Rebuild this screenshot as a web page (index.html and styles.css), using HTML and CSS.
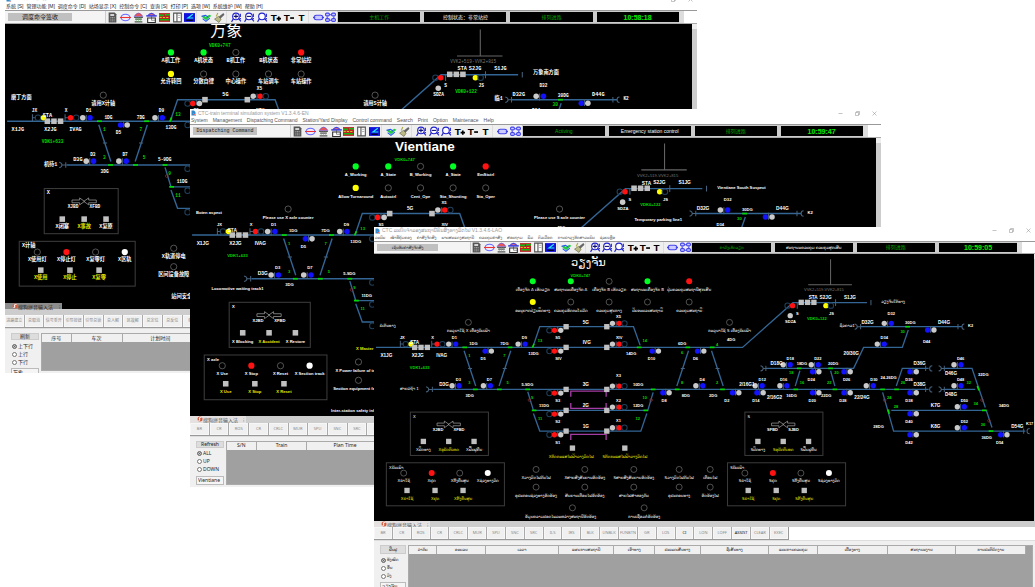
FILE: index.html
```html
<!DOCTYPE html>
<html lang="en">
<head>
<meta charset="utf-8">
<title>CTC-train terminal simulation system</title>
<link rel="stylesheet" href="styles.css">
</head>
<body>
<main class="desktop" id="desktop"></main>
<script src="app.js"></script>
</body>
</html>
```
FILE: styles.css
```css
* { box-sizing: border-box; }
body { margin: 0; background: #fff; overflow: hidden; font-family: "Noto Sans", "DejaVu Sans", "Noto Sans CJK SC", sans-serif; font-size: 4px; color: #333; }
button, select, input { font: inherit; color: inherit; margin: 0; padding: 0; border: 0; border-radius: 0; }
.desktop { position: relative; height: 100vh; overflow: hidden; }

.win { position: absolute; display: flex; flex-direction: column; background: #fff; line-height: 1; }
.win-zh { left: 5px; top: -5px; width: 66.9%; --title: 8px; --menu: 7px; --tool: 14px; font-family: "Liberation Sans", "Noto Sans CJK SC", sans-serif; }
.win-en { left: 190px; top: 109px; width: 66.8%; --title: 8px; --menu: 7px; --tool: 14px; }
.win-lo { left: 374px; top: 227px; width: 63.9%; --title: 7px; --menu: 7px; --tool: 13px; font-family: "Noto Sans", "DejaVu Sans", sans-serif; }

.titlebar { display: flex; align-items: center; gap: 2px; height: var(--title); padding-left: 1px; color: #999; }
.titlebar svg { width: 5px; height: 6px; }
.titlebar h2 { flex: 1; margin: 0; font-size: 4px; font-weight: 400; white-space: nowrap; }
.win-en .titlebar h2, .win-lo .titlebar h2 { font-family: "Liberation Sans", "DejaVu Sans", sans-serif; font-size: 5px; }
.caption { display: flex; gap: 12px; padding-right: 4px; }
.caption button { background: none; width: 5px; height: 6px; }
.caption svg { display: block; width: 5px; height: 5px; }
.menu { display: flex; align-items: center; gap: 5px; height: var(--menu); padding-left: 1px; white-space: nowrap; }
.menu a { color: #555; text-decoration: none; }
.win-zh .menu { font-size: 5px; gap: 3px; }
.win-zh .menu a { color: #222; }
.win-en .menu { font-size: 5px; font-family: "Liberation Sans", sans-serif; }

.toolbar { display: flex; align-items: stretch; height: var(--tool); background: #efefef; border-top: 1px solid #999; border-bottom: 1px solid #aaa; }
.command { width: 14.6%; padding: 2px 0 2px 3px; background: #f4f4f4; border-right: 1px solid #ccc; display: flex; }
.command button { width: 66%; background: #c0c0c0; color: #222; white-space: nowrap; }
.win-en .command button { font: 5px "Liberation Mono", monospace; }
.win-zh .command button { font-size: 6px; }
.icons { display: flex; width: 33.4%; }
.icons button { flex: 13; background: none; display: flex; align-items: center; justify-content: center; min-width: 0; }
.icons svg { width: 11px; height: 11px; }
.icons span { flex: 3; border-left: 1px solid #ddd; }
.states { flex: 1; display: grid; grid-template-columns: repeat(4, 1fr); gap: 4px; border-right: 5px solid #ddd; background: #ccc; padding-left: 1px; font-size: 5px; font-family: "Liberation Sans", "DejaVu Sans", "Noto Sans CJK SC", sans-serif; }
.states output { display: flex; align-items: center; justify-content: center; background: #000; margin: 1px 0; color: #00a800; white-space: nowrap; min-width: 0; }
.states output:nth-child(2) { color: #fff; }
.states output:nth-child(4) { color: #00f000; font: bold 7px "Liberation Sans", sans-serif; }
.win-lo .states output:nth-child(-n+2) { font-size: 4px; }
.states + i { width: 2%; background: #fff; }

.view { display: flex; background: #000; }
.view svg { display: block; flex: 1; min-width: 0; }
.vbar { width: 5px; background: #cdcdcd; border-top: 5px solid #eee; }
.win-lo .vbar { width: 1px; }
.hbar { display: flex; height: 7px; background: #f2f2f2; }
.win-lo .hbar, .win-zh .hbar { height: 6px; }
.hbar i { width: 94%; background: #cdcdcd; margin-right: auto; }
.ime { width: 57px; background: #e6e1e1; color: #555; display: flex; align-items: center; justify-content: space-between; padding: 0 2px 0 7px; white-space: nowrap; font-size: 5px; font-family: "Noto Sans CJK SC", sans-serif; }
.ime b { font-weight: 400; margin-right: auto; }
.ime svg { width: 6px; height: 6px; }
.win-zh .ime { position: absolute; left: 0; bottom: 64px; height: 6px; background: #8c8c8c; color: #222; }
.actions { display: flex; height: 13px; background: #fff; }
.actions div { width: 62.7%; display: grid; grid-template-columns: repeat(22, 1fr); background: #aaa; gap: 1px; border-right: 1px solid #999; border-bottom: 1px solid #999; }
.actions button { background: #f0f0f0; color: #888; overflow: hidden; white-space: nowrap; border: 1px solid #f7f7f7; }
.actions button.on { color: #111; }

.dock { display: flex; gap: 2px; padding: 4px 2px 2px 6px; height: 53px; background: #f0f0f0; border-top: 1px solid #ddd; overflow: hidden; }
.win-zh .dock { height: 45px; }
.win-en .dock { height: 51px; }
.side { width: 28px; display: flex; flex-direction: column; }
.win-lo .side { width: 26px; }
.side > button { height: 9px; background: #ddd; border: 1px solid #ccc; margin-bottom: 3px; font-size: 5px; color: #222; }
.side fieldset { border: 0; margin: 0; padding: 0 0 0 1px; display: grid; gap: 2px; }
.side label { display: flex; align-items: center; gap: 1px; height: 6px; font-size: 5px; color: #222; }
.win-lo .side > button, .win-lo .side label { font-size: 4px; }
.side input { appearance: none; width: 5px; height: 5px; border: 1px solid #777; border-radius: 50%; background: #fff; flex: none; }
.side input:checked { background: #444; box-shadow: inset 0 0 0 1px #ccc; }
.side select { appearance: none; height: 9px; margin-top: 3px; border: 1px solid #bbb; background: #f5f5f5; padding-left: 1px; color: #222; flex: none; font-size: 5px; }
.grid { flex: 1; background: #a0a0a0; border: 1px solid #aaa; min-width: 0; }
.grid table { width: 99%; table-layout: fixed; border-collapse: collapse; }
.grid th { height: 8px; padding: 0; background: #f0f0f0; border-right: 1px solid #aaa; font-weight: 400; font-size: 5px; color: #222; white-space: nowrap; overflow: hidden; }
.win-lo .grid th { font-size: 4px; }

svg text { text-anchor: middle; dominant-baseline: central; fill: #fff; font-weight: 700; font-size: 12px; font-family: "Liberation Sans", "DejaVu Sans", sans-serif; }
svg .track { fill: none; stroke: #336595; stroke-width: 4px; }
svg .thin { fill: none; stroke: #47627c; stroke-width: 3px; }
svg .point { stroke: #00d800; stroke-width: 5px; fill: none; }
svg .platform { fill: none; stroke: #a43ca4; stroke-width: 4px; }
svg .wire { stroke: #666; stroke-width: 3px; fill: none; }
svg .frame { fill: none; stroke: #3c3c3c; stroke-width: 3px; }
svg .arrow { fill: #000; stroke: #aaa; stroke-width: 2px; }
svg .sq { fill: #c0c0c0; }
svg .cross { fill: none; stroke: #8b3030; stroke-width: 2px; }
svg .lamp { fill: none; stroke: #777; stroke-width: 2px; }
svg .a { fill: #cacaca; } svg .b { fill: #1212ff; } svg .r { fill: #ff1212; } svg .y { fill: #ff0; } svg .w { fill: #fff; } svg .n { fill: #0f2; }
svg .h { fill: none; stroke: #20405c; stroke-width: 3px; }
svg text.big { font-size: 14px; }
svg text.green { fill: #00d800; }
svg text.gold { fill: #eaea00; }
svg text.dim { fill: #777; font-weight: 400; }
svg text.start { text-anchor: start; }
svg text.name { font-size: 39px; text-anchor: start; }
.win-zh .view text { font-size: 13px; font-family: "Liberation Mono", "Noto Sans CJK SC", monospace; }
.win-zh .view text.big, .win-zh .view text.local { font-size: 15px; }
.win-zh .view text.name { font-size: 46px; font-weight: 400; }
.win-lo .view text.local { font-family: "DejaVu Sans", sans-serif; font-weight: 400; font-size: 12px; }
.win-lo .view text.name { font-family: "DejaVu Sans", sans-serif; font-size: 34px; font-weight: 400; }
.icons svg text { font: bold 18px "Liberation Sans", sans-serif; fill: #000; dominant-baseline: auto; }
```
FILE: app.js
```js
const times = (list, fn) => list.map(fn).join('');
const label = (t, x, y, cls = '') => t ? `<text x="${x}" y="${y}" class="${cls}">${t}</text>` : '';
const dot = (x, y, c, r = 8) => `<circle cx="${x}" cy="${y}" r="${r}" class="${c}"/>`;
const lamp = (x, y, c = 'lamp') => dot(x, y, c, 9);
const square = (x, y) => `<rect x="${x - 8}" y="${y - 8}" width="16" height="16" class="sq"/>`;
const path = (d, c = 'track') => `<path d="${d}" class="${c}"/>`;

/* "text x y" entries separated by commas */
const labels = (src, cls) => times(src.split(','), s => {
  const [t, x, y] = s.trim().split(' ');
  return label(t, x, y, cls);
});
/* grey-then-blue and blue-then-grey shunting signals */
const greyBlue = pts => times(pts, ([x, y]) => path(`M${x + 10} ${y - 8}v20`, 'thin') + dot(x, y, 'a') + dot(x + 21, y, 'b'));
const blueGrey = pts => times(pts, ([x, y]) => path(`M${x + 9} ${y - 12}v20`, 'thin') + dot(x, y, 'b') + dot(x + 19, y, 'a'));
const points = pts => times(pts, ([x, y]) => path(`M${x - 7} ${y}h14`, 'point'));
const crosses = pts => times(pts, ([x, y]) => `<circle cx="${x}" cy="${y}" r="4" class="cross"/>`);

function westYard() {
  return `<g transform="translate(-12 228)">` +
    path('M18 52H1117L1268 -82H1490') +
    path('M488 52L509 -10H790L810 46') +
    path('M282 62L317 168M422 62L387 168M955 62L920 168M473 185L490 241H833L849 187M490 250L509 303H812L830 250') +
    path('M190 178H1675') +
    path('M168 170q8 2 8 8q0 6 -8 8M176 178h14M187 170v16', 'thin') +
    path('M294 115h12M398 115h12M932 115h12', 'thin') +
    path('M602 200V183H708V200M602 219V235H708V219M602 330V313H708V330', 'platform') +
    points([[284, 52], [420, 52], [807, 52], [953, 52], [1026, 52], [316, 178], [388, 178], [473, 178], [849, 178], [921, 178], [492, 241], [827, 241]]) +
    path('M487 53l5 -12', 'point') + crosses([[478, 210], [843, 210]]) +
    path('M91 32v20M91 42h10M185 32v20M185 42h10', 'thin') +
    dot(107, 42, 'h') + dot(123, 42, 'y') + square(134, 52) + square(153, 52) + square(172, 52) +
    dot(201, 42, 'r') + dot(217, 42, 'h') +
    greyBlue([[236, 42], [444, 42], [246, 167], [340, 167], [977, 167]]) +
    blueGrey([[345, 63], [846, 63], [982, 63], [878, 188]]) +
    times([-10, 52, 178, 241, 303], y => path(`M563 ${y}v16M738 ${y - 18}v16`, 'thin') +
      square(588, y) + square(710, y) + dot(538, y + 11, 'h') + dot(553, y + 11, 'r') + dot(572, y + 11, 'a') +
      dot(727, y - 10, 'a') + dot(747, y - 10, 'r') + dot(763, y - 10, 'h')) +
    labels('JX 97 22,X 188 22,D1 253 22,1DG 310 40,D5 339 85,7DG 403 40,D9 463 22,13DG 490 70,S5 563 22,SIV 565 85,14DG 783 70,XIV 747 22,D10 844 85,6DG 936 40,D6 976 85,3DG 299 196,D3 265 147,D7 358 147,5-9DG 472 163,11DG 522 226,S3 563 210,X3 745 137,10DG 804 163,D8 882 210,8DG 947 196,D4 996 147,S2 563 273,X2 745 210,12DG 804 226,S1 563 336,X1 745 272,X5 745 -41') +
    labels('STA 134 38,5G 647 -24,X1JG 49 77,X2JG 143 77,IVAG 215 77,D3G 222 163,IVG 650 38,3G 647 163,2G 647 226,1G 647 289', 'big') +
    labels('VDK1+633 149 111,1 298 77,3 298 157,7 403 77,5 413 157,13 510 32,14 824 32,6 936 66,8 936 157,9 486 202,11 510 265,10 824 202,12 803 265', 'green') + '</g>';
}

function eastYard() {
  return `<g transform="translate(978 228)">` +
    path('M198 115H460L490 52H606L624 0M480 -10H785') +
    path('M34 62L69 168M299 122L285 168M391 122L404 168M588 168L606 115H685M730 115H815L855 232M730 178H825') +
    path('M573 241H858L875 292M547 187L580 303H975') +
    path('M181 107q8 2 8 8q0 6 -8 8M189 115h12M197 107v16M463 -18q8 2 8 8q0 6 -8 8M471 -10h10M481 -18v16M773 -18v16M792 -18q-7 0 -7 8q0 8 7 8', 'thin') +
    path('M676 107v16M696 107q-8 0 -8 8q0 8 8 8M676 170v16M696 170q-8 0 -8 8q0 8 8 8M715 107q8 2 8 8q0 6 -8 8M715 170q8 2 8 8q0 6 -8 8M723 115h8M723 178h8M732 107v16M732 170v16M970 295v16M988 295q-8 0 -8 8q0 8 8 8M46 115h12', 'thin') +
    points([[67, 178], [287, 178], [404, 178], [547, 178], [589, 178], [297, 115], [391, 115], [852, 241], [872, 303], [622, -10]]) +
    path('M563 238l4 13M831 168l5 13', 'point') + crosses([[553, 210], [845, 210], [866, 272]]) +
    greyBlue([[165, 167], [239, 167], [249, 104], [333, 104], [498, 167], [531, 42], [761, 104], [761, 167], [771, 230], [771, 293], [552, -20]]) +
    blueGrey([[97, 188], [170, 188], [337, 125], [431, 125], [337, 188], [431, 188], [629, 125], [629, 188], [629, 251], [629, 314], [901, 314], [682, 0]]) +
    path('M391 -212V-136M324 -136H455', 'wire') + label('VVK2+519-VVK2+815', 371, -121, 'dim') +
    path('M291 -84v20M406 -92v20M512 -90v16', 'thin') +
    dot(262, -73, 'h') + dot(277, -73, 'r') + dot(270, -43, 'a') + square(303, -83) + square(322, -83) + square(341, -83) +
    dot(377, -73, 'y') + dot(392, -73, 'h') +
    labels('4DG 93 29,D2 80 210,2DG 39 196,D12 186 147,D14 167 210,D16 250 147,16DG 274 196,D18 270 85,18DG 305 101,D22 353 85,20DG 399 101,D24 333 149,D26 439 149,D20 336 211,22DG 378 196,D28 428 211,D30 521 147,24-26DG 565 143,D34 552 22,D36 626 149,D38 626 211,D40 626 273,D42 626 336,D46 781 85,D48 781 148,D50 792 211,D52 792 273,32DG 849 133,34DG 911 227,36DG 859 321,28DG 535 289,D54 898 336,K17 988 280,D44 679 34,D32 573 -50,30DG 630 -23,K2 811 -14,SDZA 271 -25,S 291 -50,JS 394 -50') +
    labels('D18G 229 101,2/16G1 140 163,2/16G2 223 202,22/24G 485 202,20/30G 453 70,D36G 658 101,D38G 658 164,K7G 706 226,K8G 706 289,D46G 752 130,D48G 752 193,D54G 951 289,D32G 502 -24,D44G 731 -24,STA 339 -97,S2JG 376 -99,S1JG 449 -99', 'big') +
    labels('4 51 42,2 51 157,16 305 157,18 273 128,20 409 128,22 387 157,26 608 157,24 567 202,28 587 230,30 607 5,32 805 157,34 826 220,36 848 283,VDK0+122 350 -35', 'green') + '</g>';
}

function blockPanel(x, side, w) {
  const mid = x + 115, step = w.blockStep, names = w.block.map(n => side + n);
  return `<rect x="${x}" y="474" width="${w.blockWidth}" height="130" class="frame"/>` +
    label(side, x + 12, 487, 'local') +
    path(`M${mid - 35} 507h22v-6l14 10l-14 10v-6h-22zM${mid + 35} 507h-22v-6l-14 10l14 10v-6h22z`, 'arrow') +
    label(side === 'X' ? 'XJBD' : 'SFBD', mid - 32, 527) + label(side === 'X' ? 'XFBD' : 'SJBD', mid + 31, 527) +
    times(names, (n, i) => square(mid + (i - 1) * step, 562) + label(n, mid + (i - 1) * step, 586, 'local' + (i === 1 ? ' gold' : '')));
}

function axlePanel(x, side, w) {
  return `<rect x="${x}" y="626" width="${w.axleWidth}" height="129" class="frame"/>` +
    label(side + w.axleTitle, x + 8, 639, 'local start') +
    times(w.axleLamps, (n, i) => lamp(x + 52 + i * 84, 657, ['lamp', 'r', 'lamp', 'w'][i]) + label(side + n, x + 52 + i * 84, 680, 'local')) +
    times(w.axleKeys, (n, i) => square(x + 62 + i * 84, 709) + label(side + n, x + 62 + i * 84, 732, 'local gold'));
}

function schematic(w) {
  const colors = ['n', 'n', 'lamp', 'n', 'r', 'y', 'lamp', 'lamp', 'lamp', 'lamp'];
  const faults = [486, 632, 779, 915, 1008];
  return `<svg viewBox="0 0 1980 ${w.height}" role="img" aria-label="${w.name}">` +
    label(w.name, 591, 24, 'name') + label('VDK0+747', 619, 63, 'green') +
    times(w.lights, (n, i) => {
      const x = w.lightX[i % 5], y = i < 5 ? 82 : 144;
      return lamp(x, y, colors[i]) + label(n, x, y + 24, 'local');
    }) +
    label(w.north, 17, 214, 'local start') + lamp(283, 205) + label(w.counterX, 283, 230, 'local') +
    label(w.south, 1521, 142, 'local start') + lamp(1066, 205) + label(w.counterS, 1066, 229, 'local') +
    label(w.park[0], w.park[1], w.park[2], 'local start') + label(w.wait[0], w.wait[1], w.wait[2], 'local start') +
    westYard() + eastYard() +
    blockPanel(w.panelX, 'X', w) + blockPanel(1112, 'S', w) +
    axlePanel(w.panelX - 72, 'X', w) + axlePanel(1060, 'S', w) +
    square(595, 582) + square(752, 582) +
    label(w.master[0], w.masterX, 607, 'local gold start') + label(w.master[1], 752, 607, 'local gold') +
    times(faults, (x, i) => lamp(x, 646) + label(w.faults[i], x, 671, 'local') + lamp(x, 699) + label(w.faults[i + 5], x, 723, 'local')) +
    lamp(595, 761) + lamp(810, 761) + label(w.safety[0], w.safetyX, 786, 'local start') + label(w.safety[1], 810, 786, 'local') + '</svg>';
}

const icon = body => `<svg viewBox="0 0 20 20">${body}</svg>`;
const glass = mark => icon(`<circle cx="9" cy="8" r="6" fill="#fff" stroke="#22c" stroke-width="2"/><path d="M4 13L1 18M14 12l4 5M17 3v6M17 11v2" stroke="#22c" stroke-width="2"/><path d="${mark}" stroke="#117" stroke-width="2"/>`);
const loop = '<ellipse cx="10" cy="10" rx="8" ry="6" fill="#eef" stroke="#66f" stroke-width="2"/>';
const icons = [
  ['Calculator', icon('<path d="M3 1h11l3 3v15H3z" fill="#555"/><path d="M6 4h7v3H6z" fill="#eee"/><path d="M6 10h9M6 13h9M6 16h9" stroke="#ddd" stroke-dasharray="2 1"/>')],
  ['Section', icon(loop + '<path d="M0 10h20" stroke="#e33" stroke-width="2"/>')],
  ['Station', icon('<path d="M2 8q8-12 16 0z" fill="#e55" stroke="#44d"/><path d="M2 10h16M4 13h12M3 18h14" stroke="#555" stroke-width="2"/><path d="M6 10v8M10 10v8M14 10v8" stroke="#6a6"/>')],
  ['Yard', icon('<path d="M3 7q7-9 14 0z" fill="#e66" stroke="#44d" stroke-width="2"/><path d="M0 7h20" stroke="#44d" stroke-width="2"/><path d="M3 11h14v8H3z" fill="#fff" stroke="#333" stroke-width="2"/><path d="M10 8v7h7" stroke="#333" fill="none"/>')],
  ['Map', icon('<path d="M0 2h20v16H0z" fill="#b22"/><path d="M0 6h9M11 5h9M2 14h16" stroke="#1b1" stroke-width="3"/><path d="M1 10h18" stroke="#db2" stroke-width="2" stroke-dasharray="4 2"/>')],
  ['Report', icon('<path d="M3 2h14v16H3zM9 2v16" fill="#fff" stroke="#555" stroke-width="2"/><path d="M11 6h4M11 10h4" stroke="#777"/>')],
  ['Plan', icon('<path d="M0 2h20v16H0z" fill="#11d"/><path d="M16 4L7 11h10" fill="none" stroke="#2ee" stroke-width="2"/><path d="M4 15h12" stroke="#000" stroke-width="2"/>')],
  null,
  ['Accept', icon('<path d="M1 8l8 7 10-8-4-2-6 4-3-2z" fill="#2c4"/><path d="M1 8l7-2 5 3M3 12l6 5 7-6" stroke="#25e" stroke-width="2" fill="none"/>')],
  ['Brush', icon('<path d="M17 2l2 3-7 7-4-3z" fill="#666"/><path d="M8 8l5 5-4 6-8-6z" fill="#bb8" stroke="#553"/><path d="M4 8l3-6" stroke="#aa4" stroke-width="2"/>')],
  null,
  ['Zoom in', glass('M5 8h8M9 4v8')],
  ['Zoom out', glass('M5 8h8')],
  ['Zoom', glass('')],
  ['Larger text', icon('<text x="7" y="17">T</text><path d="M12 12h8M16 8v8" stroke="#000" stroke-width="3"/>')],
  ['Smaller text', icon('<text x="7" y="17">T</text><path d="M13 11h7" stroke="#000" stroke-width="3"/>')],
  ['Text', icon('<text x="10" y="17">T</text>')],
  null,
  ['Link', icon('<rect x="2" y="6" width="16" height="8" rx="4" fill="#ccf" stroke="#44e" stroke-width="2"/><path d="M0 10h4M16 10h4" stroke="#44e" stroke-width="2"/>')],
  ['Link all', icon('<g fill="#ccf" stroke="#44e" stroke-width="2"><rect x="1" y="2" width="7" height="5" rx="2"/><rect x="12" y="2" width="7" height="5" rx="2"/><rect x="1" y="12" width="7" height="5" rx="2"/><rect x="12" y="12" width="7" height="5" rx="2"/></g><path d="M8 5h4M8 15h4M4 8v4M16 8v4" stroke="#44e" stroke-width="2"/>')]
];

const windows = [{
  cls: 'win-zh', lang: 'zh', height: 822, title: 'CTC-车务终端仿真系统 V1.3.4.6',
  menu: ['系统 [S]', '管理功能 [M]', '调度命令 [D]', '站场显示 [X]', '控制命令 [C]', '查询 [S]', '打印 [P]', '选项 [W]', '系统维护 [W]', '帮助 [H]'],
  command: '调度命令签收', states: ['主机工作', '控制状态：非常站控', '排列进路', '10:58:18'],
  name: '万象', lightX: [478, 572, 665, 759, 853],
  lights: ['A机工作', 'A机状态', 'B机工作', 'B机状态', '非常站控', '允许转回', '分散自律', '中心操作', '车站调车', '车站操作'],
  north: '磨丁方面', south: '万象南方面', counterX: '请用X计轴', counterS: '请用S计轴',
  park: ['临1', 1410, 217], wait: ['机待1', 112, 405],
  panelX: 113, blockWidth: 213, blockStep: 63, block: ['闭塞', '事故', '复原'],
  axleWidth: 334, axleTitle: '计轴', axleLamps: ['使用灯', '停止灯', '复零灯', '区轨'], axleKeys: ['使用', '停止', '复零'],
  master: ['', ''], masterX: 595, faults: ['X轨道停电', '', '', '', '', '区间设备故障', '', '', '', ''], safety: ['站间安全信息传输故障', ''], safetyX: 479,
  actions: ['进路建立', '总取消', '信号重开', '引导按钮', '引导总锁', '总人解', '区故解', '总定位', '总反位', '单锁', '单解', '单封', '解封', '功能', '股道', '上电', 'CI', '开灯', '关灯', '辅助', '清除', '执行'],
  refresh: '刷新', radios: ['上下行', '上行', '下行'], station: '万象',
  columns: ['序号', '车次', '计划时间', '接车', '发车', '股道', '状态', '方向', '时间', '备注', '操作']
}, {
  cls: 'win-en', lang: 'en', height: 801, title: 'CTC-train terminal simulation system V1.3.4.6-EN',
  menu: ['System', 'Management', 'Dispatching Command', 'Station/Yard Display', 'Control command', 'Search', 'Print', 'Option', 'Maintenace', 'Help'],
  command: 'Dispatching Command', states: ['Activing', 'Emergency station control', '排列进路', '10:59:47'],
  name: 'Vientiane', lightX: [478, 572, 665, 759, 853],
  lights: ['A_Working', 'A_State', 'B_Working', 'A_State', 'EmStctrl', 'Allow Turnaround', 'Autoctrl', 'Cent_Ope', 'Sta_Shunting', 'Sta_Oper'],
  north: 'Boten aspect', south: 'Vientiane South Suspect', counterX: 'Please use X axle counter', counterS: 'Please use S axle counter',
  park: ['Temporary parking line1', 1282, 235], wait: ['Locomotive waiting track1', 62, 434],
  panelX: 113, blockWidth: 234, blockStep: 76, block: [' Blocking', ' Accident', ' Restore'],
  axleWidth: 354, axleTitle: ' axle', axleLamps: [' Use', ' Stop', ' Reset', ' Section track'], axleKeys: [' Use', ' Stop', ' Reset'],
  master: ['X Master track circuit', ''], masterX: 479, faults: ['X Power failure of track', '', '', '', '', 'Section equipment failure', '', '', '', ''], safety: ['Inter-station safety information', ''], safetyX: 407,
  actions: ['BR', 'CR', 'ROS', 'CR', 'CRLC', 'MUR', 'SPU', 'SNC', 'SRC', 'ILS', 'IRS', 'BLK', 'UNBLK', 'FUNBTN', 'GR', 'LOS', 'CI', 'LON', 'LOFF', 'ASSIST', 'CLEAR', 'EXEC'],
  refresh: 'Refresh', radios: ['ALL', 'UP', 'DOWN'], station: 'Vientiane',
  columns: ['S/N', 'Train', 'Plan Time', 'Receive', 'Depart', 'Track', 'State', 'Direction', 'Time', 'Remark', 'Action']
}, {
  cls: 'win-lo', lang: 'lo', height: 801, title: 'CTC ລະບົບຈຳລອງສະຖານີຂົນສົ່ງທາງລົດໄຟ V1.3.4.6-LAO',
  menu: ['ລະບົບ', 'ໜ້າທີ່ຄຸ້ມຄອງ', 'ຄຳສັ່ງຈັດສົ່ງ', 'ພາບສະແດງສະຖານີ', 'ຄວບຄຸມຄຳສັ່ງ', 'ສອບຖາມ', 'ພິມ', 'ຕົວເລືອກ', 'ການບຳລຸງຮັກສາລະບົບ', 'ຊ່ວຍເຫຼືອ'],
  command: 'ເຊັນຮັບຄຳສັ່ງຈັດສົ່ງ', states: ['ກຳລັງເຮັດວຽກ', 'ສະຖານະຄວບຄຸມ ຄວບຄຸມສຸກເສີນ', '排列进路', '10:59:05'],
  name: 'ວຽງຈັນ', lightX: [476, 590, 705, 820, 945],
  lights: ['ເຄື່ອງຈັກ A ເຮັດວຽກ', 'ສະຖານະເຄື່ອງຈັກ A', 'ເຄື່ອງຈັກ B ເຮັດວຽກ', 'ສະຖານະເຄື່ອງຈັກ B', 'ປຸ່ມຄວບຄຸມສະຖານີສຸກເສີນ', 'ອະນຸຍາດປ່ຽນທິດທາງ', 'ຄວບຄຸມອັດຕະໂນມັດ', 'ຄວບຄຸມສູນກາງ', 'ປັບຂະບວນສະຖານີ', 'ຄວບຄຸມສະຖານີ'],
  north: 'ບໍ່ເຕັນທາງ', south: 'ວຽງຈັນໃຕ້ທາງ', counterX: 'ກະລຸນາໃຊ້ X ເຄື່ອງນັບເພົາ', counterS: 'ກະລຸນາໃຊ້ S ເຄື່ອງນັບເພົາ',
  park: ['ຊົ່ວຄາວ1', 1396, 215], wait: ['ສາຍລໍຖ້າ 1', 78, 403],
  panelX: 109, blockWidth: 234, blockStep: 76, block: ['ປິດທາງ', 'ອຸບັດຕິເຫດ', 'ຟື້ນຟູຄືນ'],
  axleWidth: 354, axleTitle: 'ນັບເພົາ', axleLamps: ['ນຳໃຊ້', 'ຢຸດ', 'ຕັ້ງຄືນສູນ', 'ຊ່ວງທາງລົດ'], axleKeys: ['ນຳໃຊ້', 'ຢຸດ', 'ຕັ້ງຄືນສູນ'],
  master: ['Xຕັດກະແສໄຟຟ້າລາງລົດໄຟ', 'Sຕັດກະແສໄຟຟ້າລາງລົດໄຟ'], masterX: 524,
  faults: ['Xລາງລົດໄຟດັບໄຟ', 'Xສາຍສົ່ງສັນຍານຂັດຂ້ອງ', 'Sສາຍສົ່ງສັນຍານຂັດຂ້ອງ', 'Sລາງລົດໄຟດັບໄຟ', 'ເຕືອນໄຟ', 'ອຸປະກອນຊ່ວງທາງຂັດຂ້ອງ', 'ສັນຍານເຕືອນໄຟຂັດຂ້ອງ', 'ສາຍໄຟສຳຮອງດັບ', 'ອຸປະກອນທາງ', 'ຂັດຂ້ອງໄຟ'],
  safety: ['ຂໍ້ມູນຄວາມປອດໄພລະຫວ່າງສະຖານີຂັດຂ້ອງ', 'ການເຊື່ອມຕໍ່ຂັດຂ້ອງ'], safetyX: 453,
  refresh: 'ຟື້ນຟູ', radios: ['ທັງໝົດ', 'ຂຶ້ນ', 'ລົງ'], station: 'ວຽງຈັນ',
  columns: ['ລຳດັບ', 'ຂະບວນ', 'ເວລາ', 'ແຜນການສະຖານີ', 'ເຂົ້າທາງ', 'ປະເພດເສັ້ນທາງ', 'ຊື່ເສັ້ນທາງ', 'ແບບການຄວບຄຸມ', 'ເບື້ອງທາງ', 'ສະຖານະງານ', 'ການປະຕິບັດງານ']
}];
windows[2].actions = windows[1].actions;

const columnShares = [28, 49, 73, 56, 41, 46, 69, 49, 70, 69, 70];
const total = columnShares.reduce((a, b) => a + b);

document.getElementById('desktop').innerHTML = times(windows, w => `
<section class="win ${w.cls}" lang="${w.lang}">
  <header class="titlebar">
    <svg viewBox="0 0 10 12"><path d="M1 1h5l3 3v7H1z" fill="#38c"/><path d="M4 6l5 5" stroke="#e66" stroke-width="2"/></svg>
    <h2>${w.title}</h2>
    <div class="caption">
      <button aria-label="Minimize"><svg viewBox="0 0 10 10"><path d="M1 5h8" stroke="#888"/></svg></button>
      <button aria-label="Restore"><svg viewBox="0 0 10 10"><path d="M1 3h6v6H1zM3 3V1h6v6H7" fill="none" stroke="#888"/></svg></button>
      <button aria-label="Close"><svg viewBox="0 0 10 10"><path d="M1 1l8 8M9 1L1 9" stroke="#888"/></svg></button>
    </div>
  </header>
  <nav class="menu">${times(w.menu, m => `<a href="#">${m}</a>`)}</nav>
  <div class="toolbar">
    <div class="command"><button>${w.command}</button></div>
    <div class="icons">${times(icons, i => i ? `<button aria-label="${i[0]}">${i[1]}</button>` : '<span></span>')}</div>
    <div class="states">${times(w.states, s => `<output>${s}</output>`)}</div><i></i>
  </div>
  <div class="view">${schematic(w)}<div class="vbar"></div></div>
  <div class="hbar">
    <div class="ime"><svg viewBox="0 0 12 12"><circle cx="6" cy="6" r="5" fill="#d65a3c"/><path d="M9 3Q2 3 5 6t-2 3" stroke="#fff" stroke-width="2" fill="none"/></svg><b>搜狗拼音输入法</b><span>⁝</span></div>
    <i></i>
  </div>
  <div class="actions"><div>${times(w.actions, a => `<button${a === 'CI' || a === 'ASSIST' ? ' class="on"' : ''}>${a}</button>`)}</div></div>
  <div class="dock">
    <div class="side">
      <button>${w.refresh}</button>
      <fieldset>${times(w.radios, (r, i) => `<label><input type="radio" name="dir-${w.lang}"${i ? '' : ' checked'}>${r}</label>`)}</fieldset>
      <select aria-label="Station"><option>${w.station}</option></select>
    </div>
    <div class="grid"><table><thead><tr>${times(w.columns, (c, i) => `<th style="width:${(columnShares[i] / total * 100).toFixed(1)}%">${c}</th>`)}</tr></thead></table></div>
  </div>
</section>`);
```
